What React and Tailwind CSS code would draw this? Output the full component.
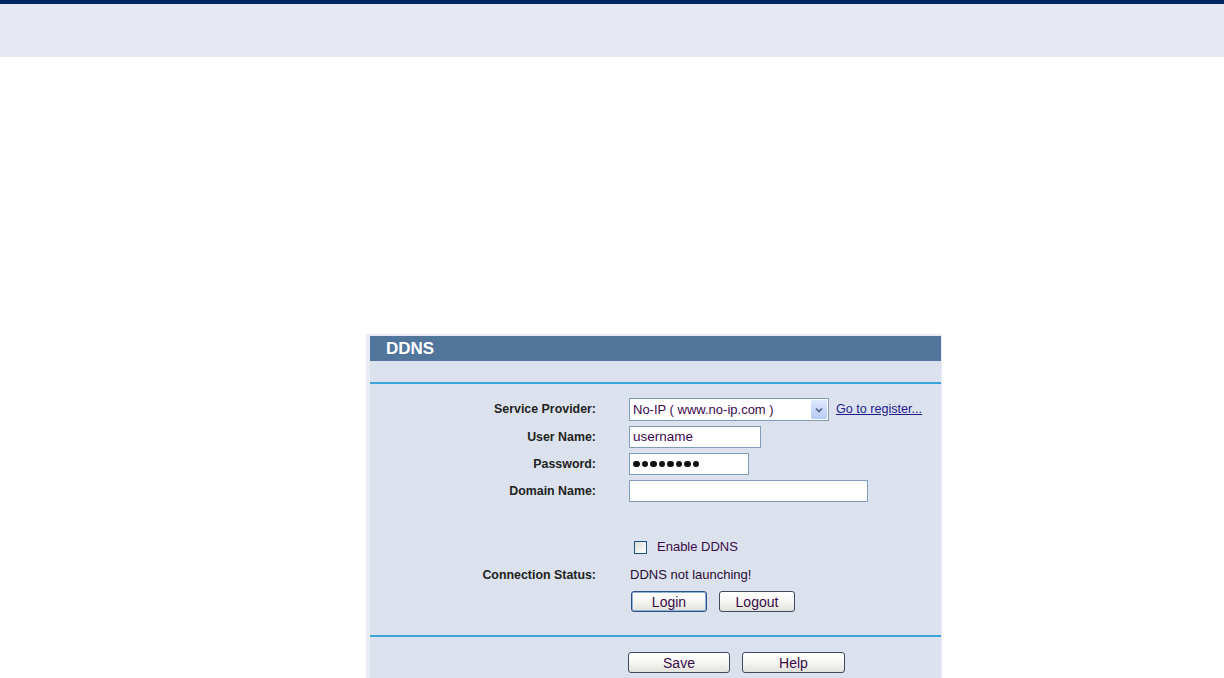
import React from 'react';

const font = { fontFamily: '"Liberation Sans", Arial, sans-serif' };

function Label({ children }) {
    return (
        <div className="w-[226px] shrink-0 text-right text-[12.4px] font-bold text-[#222]">{children}</div>
    );
}

function Btn({ children, className = '', focused = false }) {
    return (
        <button
            className={
                'h-[21px] rounded-[3px] border bg-gradient-to-b from-white via-[#f6f6f3] to-[#e2e2dc] text-[14px] leading-none text-[#3a0a4a] ' +
                (focused ? 'border-[#2b4f80] shadow-[inset_0_0_0_1px_#8fb1dc] ' : 'border-[#3e4a5c] ') +
                className
            }
        >
            {children}
        </button>
    );
}

export default function App() {
    return (
        <div className="min-h-[678px] bg-white" style={font}>
            <div className="h-[4px] bg-[#002663]"></div>
            <div className="h-[53px] bg-[#e6e9f2]"></div>

            <div className="ml-[366px] mt-[277px] w-[576px] bg-[#e8ebf2] pl-[4px] pr-[1px] pt-[2px]">
                <div className="bg-[#dce2ed] pb-[6px]">
                    <div className="h-[25px] bg-[#52759c] pl-[16px] text-[17px] font-bold leading-[25px] text-white">DDNS</div>
                    <div className="h-[21px]"></div>
                    <div className="h-[2px] bg-[#3aa5d8]"></div>

                    <div className="pt-[14px]">
                        <div className="flex h-[23px] items-center">
                            <Label>Service Provider:</Label>
                            <div className="ml-[33px] flex h-[23px] w-[200px] items-center border border-[#7f9db9] bg-white pl-[3px] pr-[1px]">
                                <span className="flex-1 text-[13px] text-[#3a0a4a]">No-IP ( www.no-ip.com )</span>
                                <span className="flex h-[19px] w-[16px] items-center justify-center rounded-[2px] bg-gradient-to-b from-[#dfe8fe] to-[#b6cbf6]">
                                    <svg width="8" height="6" viewBox="0 0 8 6">
                                        <path d="M1 1.5 L4 4.5 L7 1.5" fill="none" stroke="#4d6185" strokeWidth="1.6" />
                                    </svg>
                                </span>
                            </div>
                            <a className="ml-[7px] text-[12.6px] text-[#1b1a8f] underline">Go to register...</a>
                        </div>

                        <div className="mt-[5px] flex h-[22px] items-center">
                            <Label>User Name:</Label>
                            <div className="ml-[33px] flex h-[22px] w-[132px] items-center border border-[#7f9db9] bg-white pl-[3px] text-[13.5px] text-[#3a0a4a]">username</div>
                        </div>

                        <div className="mt-[5px] flex h-[22px] items-center">
                            <Label>Password:</Label>
                            <div className="ml-[33px] flex h-[22px] w-[120px] items-center gap-[2px] border border-[#7f9db9] bg-white pl-[3px]">
                                {[0, 1, 2, 3, 4, 5, 6, 7].map((i) => (
                                    <span key={i} className="h-[6.5px] w-[6.5px] rounded-full bg-[#111]"></span>
                                ))}
                            </div>
                        </div>

                        <div className="mt-[5px] flex h-[22px] items-center">
                            <Label>Domain Name:</Label>
                            <div className="ml-[33px] h-[22px] w-[239px] border border-[#7f9db9] bg-white"></div>
                        </div>

                        <div className="mt-[35px] flex h-[20px] items-center">
                            <div className="w-[226px] shrink-0"></div>
                            <span className="ml-[38px] h-[13px] w-[13px] border border-[#1c5180] bg-gradient-to-br from-[#dcdcd7] to-white"></span>
                            <span className="ml-[10px] text-[13px] text-[#3a0a4a]">Enable DDNS</span>
                        </div>

                        <div className="mt-[8px] flex h-[20px] items-center">
                            <Label>Connection Status:</Label>
                            <span className="ml-[34px] text-[13px] text-[#2a0a36]">DDNS not launching!</span>
                        </div>

                        <div className="mt-[6px] flex items-center">
                            <div className="w-[226px] shrink-0"></div>
                            <Btn focused className="ml-[35px] w-[76px]">Login</Btn>
                            <Btn className="ml-[12px] w-[76px]">Logout</Btn>
                        </div>

                        <div className="mt-[23px] h-[2px] bg-[#3aa5d8]"></div>

                        <div className="mt-[15px] flex items-center">
                            <div className="w-[226px] shrink-0"></div>
                            <Btn className="ml-[32px] w-[102px]">Save</Btn>
                            <Btn className="ml-[12px] w-[103px]">Help</Btn>
                        </div>
                    </div>
                </div>
            </div>
        </div>
    );
}
